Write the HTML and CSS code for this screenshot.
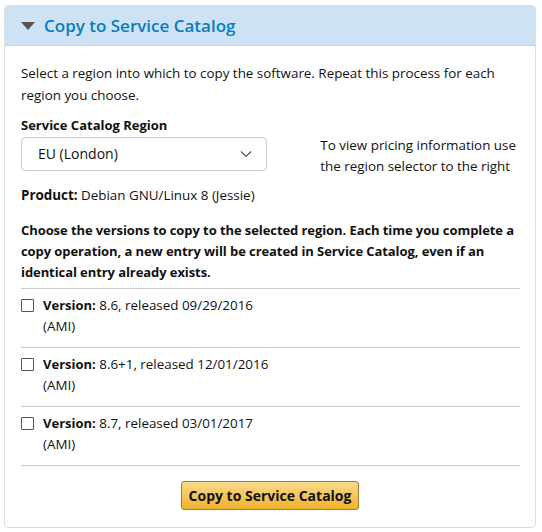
FILE: index.html
```html
<!DOCTYPE html>
<html lang="en">
<head>
  <meta charset="UTF-8" />
  <title>Copy to Service Catalog</title>
  <link rel="stylesheet" href="styles.css">
</head>
<body>
  <div class="panel">
    <div class="panel-header">
      <span class="caret"></span>
      <h2>Copy to Service Catalog</h2>
    </div>
    <div class="panel-body">
      <p class="intro">Select a region into which to copy the software. Repeat this process for each region you choose.</p>

      <div class="region-row">
        <div class="region-field">
          <label for="region">Service Catalog Region</label>
          <div class="select">
            <span>EU (London)</span>
            <svg width="12" height="8" viewBox="0 0 12 8"><path d="M1 1.5 L6 6.5 L11 1.5" fill="none" stroke="#555" stroke-width="1.2"/></svg>
          </div>
        </div>
        <p class="pricing-note">To view pricing information use the region selector to the right</p>
      </div>

      <p class="product"><b>Product:</b> Debian GNU/Linux 8 (Jessie)</p>

      <p class="instructions">Choose the versions to copy to the selected region. Each time you complete a copy operation, a new entry will be created in Service Catalog, even if an identical entry already exists.</p>

      <ul class="versions">
        <li>
          <span class="checkbox"></span>
          <div><b>Version:</b> 8.6, released 09/29/2016<br>(AMI)</div>
        </li>
        <li>
          <span class="checkbox"></span>
          <div><b>Version:</b> 8.6+1, released 12/01/2016<br>(AMI)</div>
        </li>
        <li>
          <span class="checkbox"></span>
          <div><b>Version:</b> 8.7, released 03/01/2017<br>(AMI)</div>
        </li>
      </ul>

      <div class="actions">
        <button type="button">Copy to Service Catalog</button>
      </div>
    </div>
  </div>
</body>
</html>
```

FILE: styles.css
```css
* {
  box-sizing: border-box;
  margin: 0;
  padding: 0;
}

body {
  font-family: "Open Sans", "Noto Sans", sans-serif;
  font-size: 13.4px;
  color: #111;
  background: #fff;
  padding: 5px 6px 5px 4px;
}

b {
  font-weight: 700;
}

.panel {
  border: 1px solid #ddd;
  border-radius: 4px;
  overflow: hidden;
}

.panel-header {
  display: flex;
  align-items: center;
  height: 40px;
  padding-left: 16px;
  background: #cde3f5;
  border-bottom: 1px solid #bbd6ec;
}

.caret {
  width: 0;
  height: 0;
  border-left: 7px solid transparent;
  border-right: 7px solid transparent;
  border-top: 8px solid #555;
  margin-right: 9px;
}

.panel-header h2 {
  font-size: 17px;
  font-weight: 600;
  color: #0a7bc1;
}

.panel-body {
  padding: 16px 16px 17px 16px;
  line-height: 22px;
}

.intro {
  margin-bottom: 8px;
}

.region-row {
  display: flex;
  align-items: flex-start;
}

.region-field {
  width: 248px;
}

.region-field label {
  display: block;
  font-weight: 700;
  font-size: 13px;
}

.select {
  display: flex;
  align-items: center;
  justify-content: space-between;
  height: 34px;
  margin-top: 1px;
  padding: 0 14px 0 16px;
  border: 1px solid #ccc;
  border-radius: 4px;
  font-size: 14px;
}

.pricing-note {
  margin: 21px 0 0 53px;
  width: 200px;
  line-height: 21px;
}

.product {
  margin-top: 7px;
}

.instructions {
  margin-top: 14px;
  font-size: 13px;
  font-weight: 700;
  letter-spacing: -0.08px;
  line-height: 21px;
}

.versions {
  list-style: none;
  margin-top: 5px;
  width: 499px;
}

.versions li {
  display: flex;
  align-items: flex-start;
  gap: 9px;
  border-top: 1px solid #ccc;
  padding: 6px 0 10px;
  line-height: 21px;
}

.versions li b {
  font-size: 13px;
}

.versions li:last-child {
  border-bottom: 1px solid #ccc;
}

.checkbox {
  width: 13px;
  height: 13px;
  margin-top: 4px;
  border: 1px solid #555;
  border-radius: 1px;
  flex: none;
}

.actions {
  display: flex;
  justify-content: center;
  padding-top: 15px;
}

button {
  font-family: inherit;
  font-size: 14px;
  font-weight: 700;
  line-height: 20px;
  color: #111;
  padding: 4px 7px 3px;
  border: 1px solid #9c7e31;
  border-radius: 3px;
  background: linear-gradient(#f8db8c, #f0b12c);
  cursor: pointer;
}
```
